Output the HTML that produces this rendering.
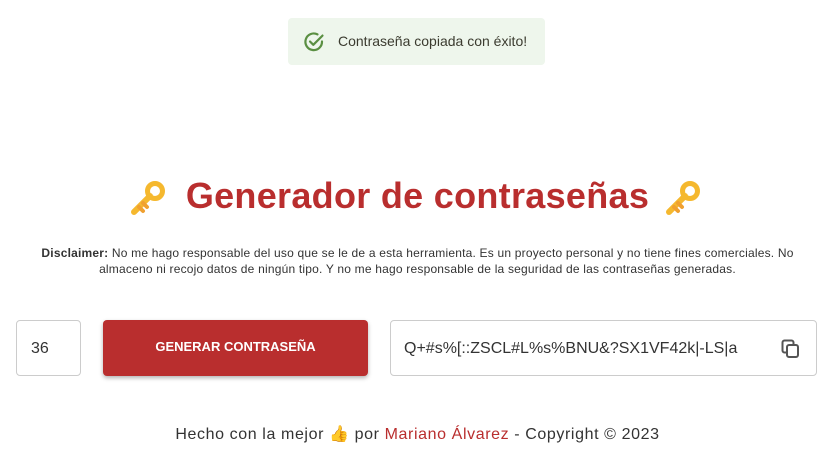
<!DOCTYPE html>
<html><head><meta charset="utf-8"><style>
*{margin:0;padding:0;box-sizing:border-box}
body{width:835px;height:464px;background:#fff;font-family:"Liberation Sans",sans-serif;position:relative;overflow:hidden;color:#333}
.toast{position:absolute;left:288px;top:18px;width:257px;height:47px;background:#eef6ec;border-radius:4px}
.toast span{position:absolute;left:50px;top:15px;font-size:14px;color:#3b3b2f;white-space:nowrap}
h1{position:absolute;left:0;width:835px;top:175px;text-align:center;font-size:36px;font-weight:bold;color:#b92e2e;letter-spacing:0.3px}
.key{position:absolute;top:180px}
.disc{position:absolute;left:10px;width:815px;top:245px;text-align:center;font-size:12px;line-height:16px;color:#333;letter-spacing:0.2px;white-space:nowrap}
.num{position:absolute;left:16px;top:320px;width:65px;height:56px;border:1px solid #ccc;border-radius:4px;font-size:16px;padding:19px 0 0 14px}
.btn{position:absolute;left:103px;top:320px;width:265px;height:56px;background:#b92e2e;border-radius:4px;box-shadow:0 2px 4px rgba(0,0,0,.3);color:#fff;font-size:13px;font-weight:bold;text-align:center;line-height:54px}
.out{position:absolute;left:390px;top:320px;width:427px;height:56px;border:1px solid #ccc;border-radius:4px;font-size:16px;padding:19px 0 0 13px}
.out svg{position:absolute;left:390px;top:18px}
.foot{position:absolute;left:0;width:835px;top:424px;text-align:center;font-size:16px;color:#333;letter-spacing:0.6px}
.foot a{color:#b92e2e;text-decoration:none}
</style></head><body>
<div class="toast"><span>Contraseña copiada con éxito!</span></div>
<svg style="position:absolute;left:303px;top:31px" width="22" height="22" viewBox="0 0 22 22"><path d="M19 10.5A8.3 8.3 0 1 1 14.5 3.4" fill="none" stroke="#5a8f42" stroke-width="2.2" stroke-linecap="round"/><path d="M7 10.5l3.3 3.3L19.5 4.6" fill="none" stroke="#5a8f42" stroke-width="2.2" stroke-linecap="round" stroke-linejoin="round"/></svg>
<svg class="key" style="left:130px" width="36" height="36" viewBox="0 0 36 36"><circle cx="25" cy="11" r="7.5" fill="none" stroke="#f5b82e" stroke-width="5"/><path d="M20 16L4 32" stroke="#f5b82e" stroke-width="6" stroke-linecap="round"/><path d="M9 27l4 4M13 23l4 4" stroke="#f0a030" stroke-width="4" stroke-linecap="round"/></svg>
<h1>Generador de contraseñas</h1>
<svg class="key" style="left:665px" width="36" height="36" viewBox="0 0 36 36"><circle cx="25" cy="11" r="7.5" fill="none" stroke="#f5b82e" stroke-width="5"/><path d="M20 16L4 32" stroke="#f5b82e" stroke-width="6" stroke-linecap="round"/><path d="M9 27l4 4M13 23l4 4" stroke="#f0a030" stroke-width="4" stroke-linecap="round"/></svg>
<div class="disc"><b>Disclaimer:</b> No me hago responsable del uso que se le de a esta herramienta. Es un proyecto personal y no tiene fines comerciales. No<br>almaceno ni recojo datos de ningún tipo. Y no me hago responsable de la seguridad de las contraseñas generadas.</div>
<div class="num">36</div>
<div class="btn">GENERAR CONTRASEÑA</div>
<div class="out">Q+#s%[::ZSCL#L%s%BNU&amp;?SX1VF42k|-LS|a
<svg width="20" height="20" viewBox="0 0 20 20"><rect x="1.5" y="1.5" width="11" height="12" rx="2" fill="none" stroke="#555" stroke-width="2"/><rect x="6" y="6" width="11" height="12" rx="2" fill="#fff" stroke="#555" stroke-width="2"/></svg></div>
<div class="foot">Hecho con la mejor <span style="color:#f0b020">👍</span> por <a>Mariano Álvarez</a> - Copyright © 2023</div>
</body></html>
